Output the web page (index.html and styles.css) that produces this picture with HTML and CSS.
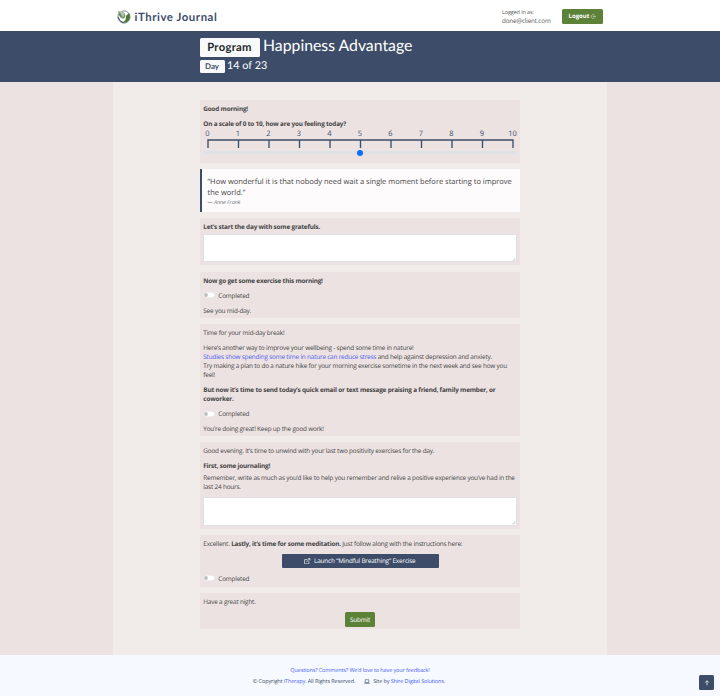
FILE: index.html
```html
<!DOCTYPE html>
<html lang="en">
<head>
<meta charset="utf-8">
<title>iThrive Journal</title>
<link rel="stylesheet" href="styles.css">
</head>
<body>
<header class="topbar">
  <div class="brand">
    <svg class="logo" viewBox="0 0 14 14"><circle cx="7" cy="7" r="6.1" fill="#fff" stroke="#5b7190" stroke-width=".8"/><path d="M1.3 1.3Q6 0 7.8 3.5Q9.5 6.8 6.3 8.7Q1.3 8 1.3 1.3Z" fill="#6e8d63"/><path d="M1.3 1.3Q6 0 7.8 3.5L6 8Q4 3 1.3 1.3Z" fill="#b9c8b1"/><path d="M12.3 3.2Q14 7 11.5 10.8Q9 13.8 4.5 12.4Q9 11.5 8.8 8Q9 4.2 12.3 3.2Z" fill="#4d7834"/><path d="M1 7Q2.5 11.7 6.8 12.8" fill="none" stroke="#3d4d69" stroke-width="1"/></svg>
    <span class="brand-name">iThrive Journal</span>
  </div>
  <div class="user"><span class="user-label">Logged in as:</span><span class="user-mail">done@client.com</span></div>
  <a class="logout"><span>Logout</span><svg viewBox="0 0 16 16"><path d="M10 4V2.5H3.5L1.5 5v6l2 2.500H10V12M6 8h9M12 5l3 3-3 3" fill="none" stroke="currentColor" stroke-width="1.4"/></svg></a>
</header>
<section class="hero">
  <div class="hero-row"><span class="badge badge-lg">Program</span><span class="hero-title">Happiness Advantage</span></div>
  <div class="hero-row"><span class="badge badge-sm">Day</span><span class="hero-day">14 of 23</span></div>
</section>
<main class="page">
  <div class="column">
    <section class="card c-scale">
      <p><b>Good morning!</b></p>
      <p class="question"><b>On a scale of 0 to 10, how are you feeling today?</b></p>
      <div class="ticks"><span>0</span><span>1</span><span>2</span><span>3</span><span>4</span><span>5</span><span>6</span><span>7</span><span>8</span><span>9</span><span>10</span></div>
      <svg class="ruler" viewBox="0 0 307 9"><path d="M.300 1H306.700M1 1V9M31.500 1V9M62 1V9M92.500 1V9M123 1V9M153.500 1V9M184 1V9M214.500 1V9M245 1V9M275.500 1V9M306 1V9" fill="none" stroke="#3d4d69" stroke-width="1.350"/></svg>
      <div class="slider"><div class="track"></div><div class="thumb"></div></div>
    </section>
    <blockquote class="quote">
      <p>“How wonderful it is that nobody need wait a single moment before starting to improve<br>the world.”</p>
      <cite>— Anne Frank</cite>
    </blockquote>
    <section class="card c-grateful">
      <p class="label"><b>Let’s start the day with some gratefuls.</b></p>
      <div class="area"><svg viewBox="0 0 4 4"><path d="M0 4L4 0M2 4L4 2" stroke="#a5a5aa" stroke-width=".6"/></svg></div>
    </section>
    <section class="card c-exercise">
      <p><b>Now go get some exercise this morning!</b></p>
      <p class="check"><svg class="switch" viewBox="0 0 12 6"><rect x=".2" y=".2" width="11.600" height="5.600" rx="2.800" fill="#fff" stroke="#d5d1d2" stroke-width=".4"/><circle cx="3" cy="3" r="1.900" fill="#bfbfbf"/></svg>Completed</p>
      <p>See you mid-day.</p>
    </section>
    <section class="card c-midday">
      <p>Time for your mid-day break!</p>
      <p>Here’s another way to improve your wellbeing - spend some time in nature!<br><a>Studies show spending some time in nature can reduce stress</a> and help against depression and anxiety.<br>Try making a plan to do a nature hike for your morning exercise sometime in the next week and see how you<br>feel!</p>
      <p><b>But now it’s time to send today’s quick email or text message praising a friend, family member, or<br>coworker.</b></p>
      <p class="check"><svg class="switch" viewBox="0 0 12 6"><rect x=".2" y=".2" width="11.600" height="5.600" rx="2.800" fill="#fff" stroke="#d5d1d2" stroke-width=".4"/><circle cx="3" cy="3" r="1.900" fill="#bfbfbf"/></svg>Completed</p>
      <p>You’re doing great! Keep up the good work!</p>
    </section>
    <section class="card c-evening">
      <p>Good evening. It’s time to unwind with your last two positivity exercises for the day.</p>
      <p class="label"><b>First, some journaling!</b></p>
      <p>Remember, write as much as you’d like to help you remember and relive a positive experience you’ve had in the<br>last 24 hours.</p>
      <div class="area"><svg viewBox="0 0 4 4"><path d="M0 4L4 0M2 4L4 2" stroke="#a5a5aa" stroke-width=".6"/></svg></div>
    </section>
    <section class="card c-meditate">
      <p>Excellent. <b>Lastly, it’s time for some meditation.</b> Just follow along with the instructions here:</p>
      <a class="launch"><svg viewBox="0 0 16 16"><path d="M9 4H1.500v10.500H12V8M6 10L14.500 1.500M10 1.500h4.500V6" fill="none" stroke="currentColor" stroke-width="1.600"/></svg><span>Launch “Mindful Breathing” Exercise</span></a>
      <p class="check"><svg class="switch" viewBox="0 0 12 6"><rect x=".2" y=".2" width="11.600" height="5.600" rx="2.800" fill="#fff" stroke="#d5d1d2" stroke-width=".4"/><circle cx="3" cy="3" r="1.900" fill="#bfbfbf"/></svg>Completed</p>
    </section>
    <section class="card c-night">
      <p>Have a great night.</p>
      <a class="submit">Submit</a>
    </section>
  </div>
</main>
<footer class="footer">
  <p><a>Questions? Comments? We’d love to have your feedback!</a></p>
  <p class="legal"><span>© Copyright <a>iTherapy</a>. All Rights Reserved.</span><svg viewBox="0 0 16 14"><path d="M3 2h10v8H3zM0 12h16" fill="none" stroke="currentColor" stroke-width="1.700"/></svg><span>Site by <a>Shire Digital Solutions</a>.</span></p>
  <a class="to-top"><svg viewBox="0 0 8 8"><path d="M4 7V1M1.700 3.400L4 1l2.300 2.400" fill="none" stroke="#fff" stroke-width="1"/></svg></a>
</footer>
</body>
</html>
```
FILE: styles.css
```css
* { box-sizing: border-box; }
body { margin: 0; height: 696px; overflow: hidden; display: flex; flex-direction: column; background: #ece2e1; color: #444; font: 6.400px/9px "Open Sans", sans-serif; letter-spacing: -.187px; text-rendering: geometricPrecision; }
p { margin: 0; white-space: nowrap; }
b { font-weight: 700; letter-spacing: -.195px; }
a { color: #4d61f3; }
.topbar { height: 31px; flex: none; background: #fff; display: flex; align-items: center; padding: 2px 117px 0 117px; }
.brand { display: flex; align-items: center; gap: 3.500px; flex: 1; }
.logo { width: 14px; height: 14px; }
.brand-name { font: 700 11.400px/16px Lato, sans-serif; letter-spacing: .56px; color: #3d4d69; margin-top: 2px; }
.user { width: 60px; display: flex; flex-direction: column; color: #555; padding-top: .500px; }
.user-label { font-size: 5.400px; line-height: 8px; letter-spacing: -.07px; }
.user-mail { font-size: 6.300px; line-height: 9px; letter-spacing: -.15px; }
.logout { width: 41px; height: 15px; border-radius: 1.500px; background: #5b8237; color: #fff; display: flex; align-items: center; justify-content: center; gap: 2px; font-weight: 700; font-size: 6px; letter-spacing: 0; }
.logout svg { width: 5px; height: 5px; }
.hero { height: 51px; flex: none; background: #3d4d69; padding: 6.500px 0 0 199.500px; color: #fff; font-family: Lato, sans-serif; letter-spacing: 0; }
.hero-row { display: flex; align-items: center; gap: 3.500px; height: 19px; }
.hero-row + .hero-row { margin-top: 3px; height: 14px; gap: 3px; }
.badge { background: #f8f9fa; color: #212529; border-radius: 1.500px; display: flex; align-items: center; justify-content: center; font-weight: 700; }
.badge-lg { width: 60px; height: 19px; font-size: 11.250px; letter-spacing: .3px; padding-top: .500px; }
.badge-sm { width: 25px; height: 13.500px; font-size: 7.900px; color: #3d4d69; padding-top: .500px; }
.hero-title { font-size: 15.800px; line-height: 18px; letter-spacing: 0; margin-top: -2px; }
.hero-day { font-size: 10.800px; line-height: 13px; margin: -2px 0 0 -.500px; }
.page { width: 494px; height: 573px; flex: none; margin: 0 auto; background: #f1ebea; padding: 18px 87px 0; }
.column { display: flex; flex-direction: column; gap: 6.350px; }
.card { background: #ece2e1; padding: 4px 3.300px 3px; display: flex; flex-direction: column; gap: 6px; flex: none; }
.label { margin-bottom: -3px; }
.c-scale { height: 63px; gap: 0; }
.question { margin-top: 6px; }
.ticks { display: grid; grid-template-columns: repeat(11, 30.500px); margin: 2.200px 0 0 -11.100px; width: 336px; text-align: center; font-size: 7.500px; line-height: 9px; letter-spacing: 0; color: #3d4d69; }
.ruler { width: 307px; height: 9px; margin: -.700px 0 0 3.300px; flex: none; }
.slider { height: 6px; margin-top: 2.200px; display: grid; align-items: center; justify-items: center; }
.slider > * { grid-area: 1 / 1; }
.track { width: 100%; height: 3px; border-radius: 2px; background: #dfe1e6; }
.thumb { width: 6px; height: 6px; border-radius: 50%; background: #0d6efd; }
.quote { margin: 0; height: 42.700px; flex: none; background: #fdfbfb; border-left: 2px solid #3d4d69; padding: 7.200px 5.500px 0; }
.quote p { font-size: 7.500px; line-height: 11.250px; letter-spacing: -.005px; }
.quote cite { display: block; font-size: 5.400px; line-height: 8px; margin-top: -.700px; letter-spacing: -.05px; color: #6c757d; }
.c-grateful { height: 47px; padding-top: 3.500px; }
.area { height: 28.500px; flex: none; background: #fff; border: .5px solid #dfe0e3; border-radius: 1px; display: flex; justify-content: flex-end; align-items: flex-end; }
.area svg { width: 3.500px; height: 3.500px; }
.c-exercise { height: 46px; }
.check { display: flex; align-items: center; gap: 3px; }
.switch { width: 12px; height: 6px; flex: none; }
.c-midday { height: 112px; }
.c-evening { height: 86.700px; }
.c-meditate { height: 51.500px; gap: 0; }
.launch { width: 157px; height: 14px; flex: none; margin: 5.500px auto 6px; background: #3d4d69; color: #fff; border-radius: 1px; display: flex; align-items: center; justify-content: center; gap: 3px; letter-spacing: -.170px; }
.launch svg { width: 6.500px; height: 6.500px; }
.c-night { height: 36px; }
.submit { width: 30px; height: 15px; flex: none; margin: 0 auto; background: #5b8237; color: #fff; border-radius: 1.500px; text-align: center; line-height: 15px; }
.footer { position: relative; flex: 1; background: #f6f9ff; padding-top: 10.500px; text-align: center; font-size: 5.500px; letter-spacing: -.12px; color: #3d4d69; }
.legal { display: flex; align-items: center; justify-content: center; gap: 3px; margin: 2px 22px 0 0; }
.legal svg { width: 6px; height: 5px; margin-left: 6px; }
.to-top { position: absolute; right: 6px; bottom: 6px; width: 15px; height: 15px; border-radius: 1.500px; background: #3d4d69; display: flex; align-items: center; justify-content: center; }
.to-top svg { width: 6px; height: 6px; }
```
